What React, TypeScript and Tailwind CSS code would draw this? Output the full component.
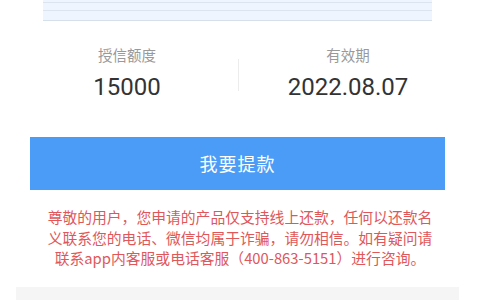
export default function App() {
  return (
    <div
      className="w-[480px] h-[300px] bg-white overflow-hidden"
      style={{ fontFamily: '"Noto Sans CJK SC", "Noto Sans", sans-serif' }}
    >
      {/* 顶部卡片底边 */}
      <div className="ml-[43px] w-[389px] bg-[#eef5fe] flex flex-col">
        <div className="h-[3px] border-b border-[#dce5ef]" />
        <div className="h-[8px] border-b border-[#dce5ef]" />
        <div className="h-[10px] border-b border-[#d6e0eb]" />
      </div>

      {/* 额度 / 有效期 */}
      <div className="ml-[16px] w-[441px] mt-[24px] flex items-start">
        <div className="w-[222px] flex flex-col items-center">
          <span className="text-[14.5px] leading-[20px] text-[#999999]">授信额度</span>
          <span
            className="mt-[6px] text-[24px] leading-[32px] text-[#333333]"
            style={{ fontFamily: 'Roboto, "Liberation Sans", sans-serif' }}
          >
            15000
          </span>
        </div>
        <div className="w-px h-[32px] mt-[14px] bg-[#ececec]" />
        <div className="w-[218px] flex flex-col items-center">
          <span className="text-[14.5px] leading-[20px] text-[#999999]">有效期</span>
          <span
            className="mt-[6px] text-[24px] leading-[32px] text-[#333333]"
            style={{ fontFamily: 'Roboto, "Liberation Sans", sans-serif' }}
          >
            2022.08.07
          </span>
        </div>
      </div>

      {/* 提款按钮 */}
      <button className="ml-[30px] mt-[34px] w-[415px] h-[53px] bg-[#4a9cf6] text-white text-[18px] tracking-[1px] flex items-center justify-center">
        我要提款
      </button>

      {/* 提示 */}
      <p className="mx-auto mt-[17px] w-[388px] text-center text-[14.8px] leading-[20.5px] text-[#e0575a]">
        尊敬的用户，您申请的产品仅支持线上还款，任何以还款名义联系您的电话、微信均属于诈骗，请勿相信。如有疑问请联系app内客服或电话客服（400-863-5151）进行咨询。
      </p>

      <div className="ml-[16px] mt-[18px] w-[443px] h-[20px] bg-[#f5f5f5]" />
    </div>
  );
}
